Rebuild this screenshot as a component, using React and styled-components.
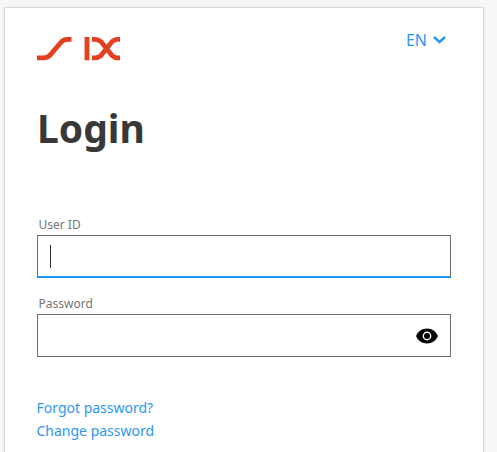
import React from "react";
import styled, { createGlobalStyle } from "styled-components";

const Global = createGlobalStyle`
  html, body { margin: 0; padding: 0; height: 100%; overflow: hidden; background: #f7f7f7; }
  body { font-family: "Noto Sans", "Open Sans", sans-serif; }
`;

const Page = styled.div`
  height: 452px;
  padding: 7px 13px 0 4px;
  box-sizing: border-box;
  overflow: hidden;
`;

const Card = styled.main`
  background: #fff;
  border: 1px solid #d9d9d9;
  border-bottom: none;
  box-shadow: 0 0 4px rgba(0, 0, 0, 0.08);
  padding: 28px 32px 0 32px;
  height: 460px;
  box-sizing: border-box;
`;

const Header = styled.header`
  display: flex;
  justify-content: space-between;
  align-items: flex-start;
  height: 26px;
`;

const Logo = styled.svg`
  width: 84px;
  height: 26px;
  display: block;
`;

const Lang = styled.button`
  all: unset;
  display: flex;
  align-items: center;
  gap: 6px;
  margin-top: -7px;
  margin-right: 5px;
  color: #2d96f3;
  font-size: 16px;
  line-height: 22px;
`;

const Title = styled.h1`
  margin: 39px 0 0 0;
  font-size: 39px;
  line-height: 53px;
  font-weight: 700;
  color: #383838;
`;

const Form = styled.form`
  margin-top: 62px;
  display: flex;
  flex-direction: column;
  gap: 17px;
`;

const Field = styled.div`
  display: flex;
  flex-direction: column;
`;

const Label = styled.label`
  font-size: 12px;
  line-height: 17px;
  margin-left: 1.5px;
  margin-bottom: 2px;
  color: #757575;
`;

const InputBox = styled.div`
  height: 43px;
  box-sizing: border-box;
  border: 1px solid #6e6e6e;
  border-bottom: ${(p) => (p.$focused ? "2px solid #2196f3" : "1px solid #6e6e6e")};
  display: flex;
  align-items: center;
  justify-content: ${(p) => (p.$focused ? "flex-start" : "flex-end")};
  padding: 0 11px 0 12px;
`;

const Caret = styled.span`
  width: 1px;
  height: 23px;
  background: #333;
`;

const EyeIcon = styled.svg`
  width: 24px;
  height: 24px;
  display: block;
`;

const Links = styled.nav`
  margin-top: 40px;
  margin-left: -0.5px;
  display: flex;
  flex-direction: column;
  gap: 1px;
`;

const TextLink = styled.a`
  color: #2d96f3;
  font-size: 14px;
  line-height: 22px;
  text-decoration: none;
`;

export default function App() {
  return (
    <Page>
      <Global />
      <Card>
        <Header>
          <Logo viewBox="0 0 84 26" aria-label="SIX">
            <g fill="none" stroke="#e2401f" strokeWidth="4.8">
              <path d="M0 21.8 H7 C10 21.8 11.5 20.8 13.5 18.6 L22.5 8 C25.5 4.6 27 3.4 31 3.4 H34.5" />
              <path d="M50 1 V24.2" />
              <path d="M55 3.4 H58 C60.5 3.4 62 4 64 5.6 L75 19.6 C77 21.2 78.5 21.8 80 21.8 H83" />
              <path d="M83 3.4 H80 C78.5 3.4 77 4 75 5.6 L64 19.6 C62 21.2 60.5 21.8 58 21.8 H55" />
            </g>
          </Logo>
          <Lang>
            EN
            <svg width="13" height="8" viewBox="0 0 13 8" fill="none" stroke="#2d96f3" strokeWidth="2.5">
              <path d="M1 1 L6.5 6 L12 1" />
            </svg>
          </Lang>
        </Header>
        <Title>Login</Title>
        <Form>
          <Field>
            <Label>User ID</Label>
            <InputBox $focused>
              <Caret />
            </InputBox>
          </Field>
          <Field>
            <Label>Password</Label>
            <InputBox>
              <EyeIcon viewBox="0 0 24 24">
                <path
                  fill="#000"
                  fillRule="evenodd"
                  d="M12 4.5C7 4.5 2.73 7.61 1 12c1.73 4.39 6 7.5 11 7.5s9.27-3.11 11-7.5c-1.73-4.39-6-7.5-11-7.5zM12 16.4a4.4 4.4 0 1 1 0-8.8 4.4 4.4 0 0 1 0 8.8zM12 15a3 3 0 1 0 0-6 3 3 0 0 0 0 6z"
                />
              </EyeIcon>
            </InputBox>
          </Field>
        </Form>
        <Links>
          <TextLink href="#">Forgot password?</TextLink>
          <TextLink href="#">Change password</TextLink>
        </Links>
      </Card>
    </Page>
  );
}
